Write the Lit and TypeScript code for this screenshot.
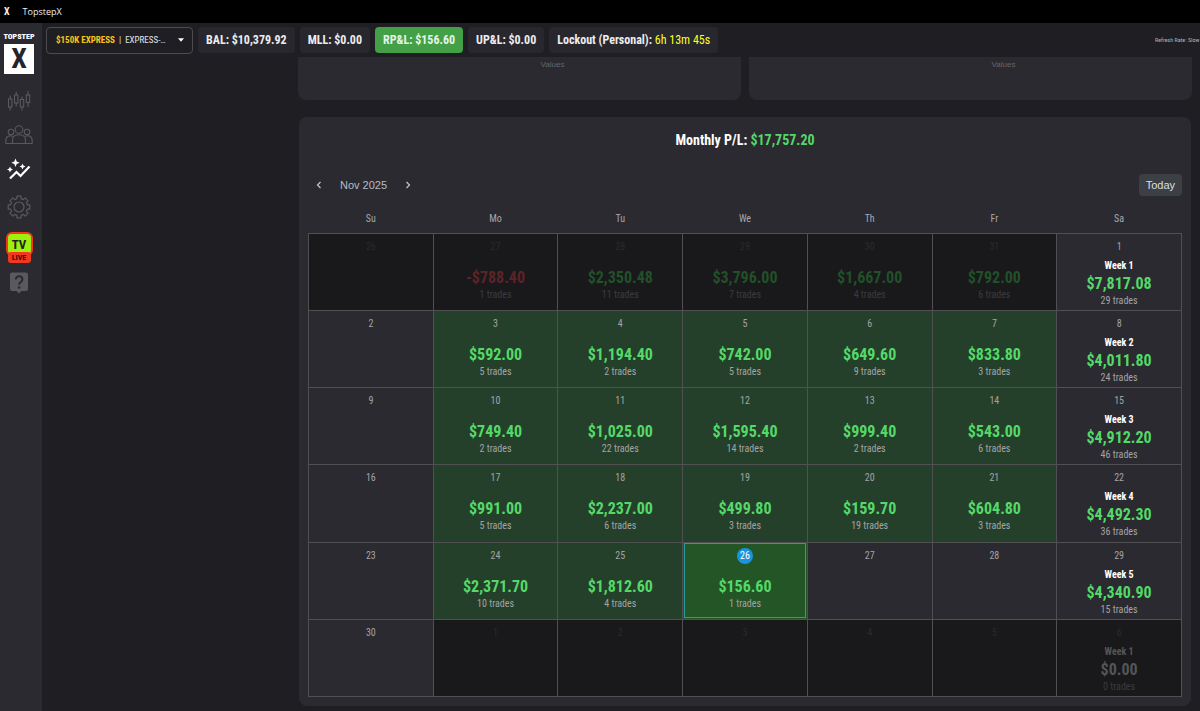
import { LitElement, html, css, svg, nothing } from "lit";
import { customElement, property } from "lit/decorators.js";
import { classMap } from "lit/directives/class-map.js";

interface Day {
  day: number;
  amount?: string;
  trades?: number;
  out?: boolean;
  today?: boolean;
  week?: number;
}

const out = (day: number, amount?: string, trades?: number): Day => ({ day, amount, trades, out: true });
const d = (day: number, amount?: string, trades?: number): Day => ({ day, amount, trades });
const w = (day: number, week: number, amount: string, trades: number, isOut = false): Day => ({
  day, week, amount, trades, out: isOut,
});

const WEEKS: Day[][] = [
  [out(26), out(27, "-$788.40", 1), out(28, "$2,350.48", 11), out(29, "$3,796.00", 7), out(30, "$1,667.00", 4), out(31, "$792.00", 6), w(1, 1, "$7,817.08", 29)],
  [d(2), d(3, "$592.00", 5), d(4, "$1,194.40", 2), d(5, "$742.00", 5), d(6, "$649.60", 9), d(7, "$833.80", 3), w(8, 2, "$4,011.80", 24)],
  [d(9), d(10, "$749.40", 2), d(11, "$1,025.00", 22), d(12, "$1,595.40", 14), d(13, "$999.40", 2), d(14, "$543.00", 6), w(15, 3, "$4,912.20", 46)],
  [d(16), d(17, "$991.00", 5), d(18, "$2,237.00", 6), d(19, "$499.80", 3), d(20, "$159.70", 19), d(21, "$604.80", 3), w(22, 4, "$4,492.30", 36)],
  [d(23), d(24, "$2,371.70", 10), d(25, "$1,812.60", 4), { day: 26, amount: "$156.60", trades: 1, today: true }, d(27), d(28), w(29, 5, "$4,340.90", 15)],
  [d(30), out(1), out(2), out(3), out(4), out(5), w(6, 1, "$0.00", 0, true)],
];

const gearPath = (() => {
  const pts: string[] = [];
  const teeth = 8;
  for (let i = 0; i < teeth; i++) {
    const a = (i * 2 * Math.PI) / teeth - Math.PI / 2;
    for (const [off, r] of [[-0.25, 8.6], [-0.19, 11], [0.19, 11], [0.25, 8.6]]) {
      pts.push(`${(12 + r * Math.cos(a + off)).toFixed(2)} ${(12 + r * Math.sin(a + off)).toFixed(2)}`);
    }
  }
  return `M${pts.join("L")}Z`;
})();

const ICONS = {
  trade: svg`<g fill="none" stroke="currentColor" stroke-width="1.1">
    <rect x="1.5" y="9" width="3.4" height="8"/><path d="M3.2 5.5V9M3.2 17v3.5"/>
    <rect x="7.5" y="5" width="3.4" height="8"/><path d="M9.2 1.5V5M9.2 13v3.5"/>
    <rect x="13.3" y="9.5" width="3.4" height="7.5"/><path d="M15 6.5v3M15 17v3.5"/>
    <rect x="19.3" y="5" width="3.4" height="7.5"/><path d="M21 1v4M21 12.5V17"/></g>`,
  people: svg`<g fill="none" stroke="currentColor" stroke-width="1.1">
    <circle cx="14" cy="5.5" r="3.8"/><circle cx="6" cy="8" r="2.8"/><circle cx="22" cy="8" r="2.8"/>
    <path d="M7.5 19.5v-3.5c0-7 13-7 13 0v3.5M.8 19.5v-3c0-4.5 4-5.5 7-4M27.2 19.5v-3c0-4.5-4-5.5-7-4M.5 19.5h27"/></g>`,
  stats: svg`<path fill="none" stroke="currentColor" stroke-width="2.2" d="M3 20.5l6.5-6.5 4 4L22.5 8.5"/>
    <g fill="currentColor"><path d="M8.5 .5l1.2 3 3 1.2-3 1.2-1.2 3-1.2-3-3-1.2 3-1.2z"/>
    <path d="M3 8.5l.9 2.1 2.1.9-2.1.9L3 14.5l-.9-2.1L0 11.5l2.1-.9z"/>
    <path d="M15.5 5.5l.9 2.1 2.1.9-2.1.9-.9 2.1-.9-2.1-2.1-.9 2.1-.9z"/></g>`,
  gear: svg`<g fill="none" stroke="currentColor" stroke-width="1.2" stroke-linejoin="round"><path d=${gearPath}/><circle cx="12" cy="12" r="5"/></g>`,
};

@customElement("side-nav")
export class SideNav extends LitElement {
  static styles = css`
    :host { display: block; background: #2b2a30; }
    nav { display: flex; flex-direction: column; align-items: center; width: 38px; padding-top: 7px; }
    .brand { display: block; color: #fff; text-decoration: none; text-align: center; }
    .brand-name { display: block; font-size: 8px; line-height: 14px; font-weight: 900; }
    .mark { display: block; width: 30px; height: 30px; margin: 0 auto; background: #fff; color: #25242a; font-size: 28px; line-height: 30px; font-weight: 700; }
    .item { display: grid; place-items: center; width: 36px; height: 34px; padding: 0; border: 0; background: none; color: #5a595f; font: inherit; }
    .active { color: #fff; }
    .gear { height: 42px; }
    .first { margin-top: 10px; }
    .live-item { height: 38px; }
    .live { display: grid; justify-items: center; }
    .tv { box-sizing: border-box; width: 27px; height: 24px; border: 2px solid #f4381f; border-radius: 6px; background: #9cf00c; color: #222; font-size: 13px; line-height: 21px; font-weight: 700; text-align: center; }
    .live-tag { width: 23px; margin-top: -4px; border-radius: 3px; background: #f4381f; color: #3a0d08; font-size: 8px; line-height: 11px; font-weight: 700; }
  `;
  render() {
    return html`<nav aria-label="Main">
      <a class="brand" href="#home"><span class="brand-name">TOPSTEP</span><span class="mark">X</span></a>
      <button class="item first" aria-label="Trade"><svg width="24" height="22" viewBox="0 0 24 22">${ICONS.trade}</svg></button>
      <button class="item" aria-label="Leaderboard"><svg width="28" height="22" viewBox="0 0 28 22">${ICONS.people}</svg></button>
      <button class="item active" aria-label="Stats"><svg width="24" height="22" viewBox="0 0 24 22">${ICONS.stats}</svg></button>
      <button class="item gear" aria-label="Settings"><svg width="24" height="24" viewBox="0 0 24 24">${ICONS.gear}</svg></button>
      <button class="item live-item"><span class="live"><span class="tv">TV</span><span class="live-tag">LIVE</span></span></button>
      <button class="item" aria-label="Help"><svg width="20" height="22" viewBox="0 0 20 22">
        <path fill="#5a595f" d="M3 .5h14a2 2 0 0 1 2 2v14.5a2 2 0 0 1-2 2h-4.5L10 21.5 7.5 19H3a2 2 0 0 1-2-2V2.5a2 2 0 0 1 2-2z"/>
        <path fill="none" stroke="#2b2a30" stroke-width="2" d="M6.8 7.5c0-4.5 6.6-4.3 6.6 0 0 2.5-3.3 2.7-3.3 5.2"/><circle cx="10.1" cy="15.5" r="1.3" fill="#2b2a30"/></svg></button>
    </nav>`;
  }
}

@customElement("top-bar")
export class TopBar extends LitElement {
  static styles = css`
    :host { display: flex; align-items: center; gap: 5px; height: 34px; padding-left: 4px; overflow: hidden; white-space: nowrap; }
    .account { display: grid; width: 147px; flex: none; align-items: center; }
    .account > * { grid-area: 1 / 1; }
    .select { appearance: none; width: 100%; height: 27px; border: 1px solid #4b4b50; border-radius: 4px; background: #1e1e23; color: transparent; font: inherit; font-size: 9px; }
    .value { display: flex; align-items: center; gap: 4px; padding: 0 9px 0 10px; font-size: 9px; color: #e4e4e6; pointer-events: none; }
    .plan { color: #fcc419; font-weight: 700; }
    .caret { margin-left: auto; }
    .chip { flex: none; padding: 0 8px; border-radius: 4px; background: #28272d; color: #ededf0; font-size: 12px; line-height: 26px; font-weight: 700; }
    .gain { background: #43a047; color: #e4f5e4; }
    .time { color: #ffff1a; font-weight: 400; }
    .refresh { flex: none; min-width: 45px; margin-left: auto; color: #b4b4b8; font-size: 6px; line-height: 10px; }
  `;
  render() {
    return html`
      <label class="account">
        <select class="select" aria-label="Account"><option>$150K EXPRESS</option></select>
        <span class="value" aria-hidden="true"><span class="plan">$150K EXPRESS</span><span>|</span><span>EXPRESS-…</span>
          <svg class="caret" width="6" height="4" viewBox="0 0 6 4"><path d="M0 .3h6L3 3.7z" fill="#fff"/></svg></span>
      </label>
      <span class="chip">BAL: $10,379.92</span>
      <span class="chip">MLL: $0.00</span>
      <span class="chip gain">RP&amp;L: $156.60</span>
      <span class="chip">UP&amp;L: $0.00</span>
      <span class="chip">Lockout (Personal): <span class="time">6h 13m 45s</span></span>
      <span class="refresh">Refresh Rate: Slow</span>`;
  }
}

@customElement("pnl-calendar")
export class PnlCalendar extends LitElement {
  @property({ attribute: false }) weeks: Day[][] = WEEKS;
  static styles = css`
    :host { display: block; padding: 13px 9px 9px; border-radius: 8px; background: #2b2a30; }
    .title { margin: 0; text-align: center; font-size: 14px; line-height: 20px; font-weight: 700; color: #fff; }
    .total { color: #54d969; }
    .tools { display: flex; align-items: center; margin-top: 24px; font-family: "Liberation Sans", Arial, sans-serif; font-size: 11px; color: #b6bcc4; }
    .step { display: grid; place-items: center; width: 22px; height: 22px; padding: 0; border: 0; background: none; color: #c6c6ca; }
    .month { margin: 0 10px; }
    .now { height: 22px; margin-left: auto; padding: 0 7px; border: 0; border-radius: 4px; background: #3c3f44; color: #dcdfe2; font: inherit; }
    table { width: 100%; height: 494px; margin-top: 7px; border-collapse: collapse; table-layout: fixed; }
    th { height: 30px; padding: 0; font-size: 10px; font-weight: 400; color: #a4a9b0; }
    td { height: 76px; box-sizing: border-box; padding: 4px 0 0; border: 1px solid #505052; vertical-align: top; text-align: center; color: #a3a3a7; }
    .day { display: block; font-size: 10px; line-height: 18px; }
    .info { display: block; margin-top: 12px; }
    .info-week { margin-top: 2px; }
    .week { display: block; font-size: 10px; line-height: 16px; font-weight: 700; color: #fff; }
    .amount { display: block; font-size: 16px; line-height: 20px; font-weight: 700; color: #54d969; }
    .trades { display: block; font-size: 10px; line-height: 14px; }
    .win { background: #25402a; }
    .out { background: #19191b; color: #3b3b3d; }
    .out .day { color: #2a2a2c; }
    .out .amount { color: #22502a; }
    .out .loss { color: #5c2428; }
    .out .zero { color: #555557; }
    .out .week { color: #555557; }
    .today { background: #235526; outline: 1px solid #2b9b9f; outline-offset: -2px; }
    .today .badge { display: inline-block; width: 16px; line-height: 16px; border-radius: 50%; background: #1a94dc; color: #fff; }
  `;
  private cell(c: Day) {
    const amount = classMap({ amount: true, loss: !!c.amount?.startsWith("-"), zero: c.amount === "$0.00" });
    return html`<td class=${classMap({ out: !!c.out, today: !!c.today, win: !!c.amount && !c.week && !c.out && !c.today })}>
      <span class="day"><span class="badge">${c.day}</span></span>
      ${c.amount ? html`<span class=${classMap({ info: true, "info-week": !!c.week })}>
        ${c.week ? html`<span class="week">Week ${c.week}</span>` : nothing}
        <span class=${amount}>${c.amount}</span><span class="trades">${c.trades} trades</span></span>` : nothing}
    </td>`;
  }
  render() {
    return html`
      <h2 class="title">Monthly P/L: <span class="total">$17,757.20</span></h2>
      <div class="tools">
        <button class="step" aria-label="Previous month"><svg width="6" height="8" viewBox="0 0 6 8"><path d="M4.5 1l-3 3 3 3" fill="none" stroke="currentColor" stroke-width="1.2"/></svg></button>
        <span class="month">Nov 2025</span>
        <button class="step" aria-label="Next month"><svg width="6" height="8" viewBox="0 0 6 8"><path d="M1.5 1l3 3-3 3" fill="none" stroke="currentColor" stroke-width="1.2"/></svg></button>
        <button class="now">Today</button>
      </div>
      <table>
        <thead><tr>${["Su", "Mo", "Tu", "We", "Th", "Fr", "Sa"].map((n) => html`<th scope="col">${n}</th>`)}</tr></thead>
        <tbody>${this.weeks.map((row) => html`<tr>${row.map((c) => this.cell(c))}</tr>`)}</tbody>
      </table>`;
  }
}

@customElement("app-root")
export class AppRoot extends LitElement {
  static styles = css`
    :host { display: grid; grid-template: 23px 1fr / 42px minmax(0, 1fr); min-height: 100vh; background: #1e1e23; color: #e6e6e8; font-family: "Roboto Condensed", "Liberation Sans Narrow", Roboto, sans-serif; }
    .window { grid-column: 1 / 3; display: flex; align-items: center; gap: 13px; padding-left: 4px; background: #000; color: #f0f0f0; font-family: "Open Sans", sans-serif; font-size: 9px; }
    .glyph { font-family: "Roboto Condensed", "Liberation Sans Narrow", Roboto, sans-serif; font-size: 10px; font-weight: 700; }
    .content { padding: 0 8px 5px 256px; }
    .charts { display: grid; grid-template-columns: 1fr 1fr; gap: 8px; }
    .chart { height: 43px; border-radius: 0 0 8px 8px; background: #2b2a30; color: #66666a; font-family: "Liberation Sans", Arial, sans-serif; font-size: 8px; line-height: 16px; text-align: center; text-indent: 66px; }
    .calendar { margin: 17px 1px 0; }
  `;
  render() {
    return html`
      <header class="window"><span class="glyph">X</span><span>TopstepX</span></header>
      <side-nav></side-nav>
      <div>
        <top-bar></top-bar>
        <main class="content">
          <div class="charts"><div class="chart">Values</div><div class="chart">Values</div></div>
          <pnl-calendar class="calendar"></pnl-calendar>
        </main>
      </div>`;
  }
}
